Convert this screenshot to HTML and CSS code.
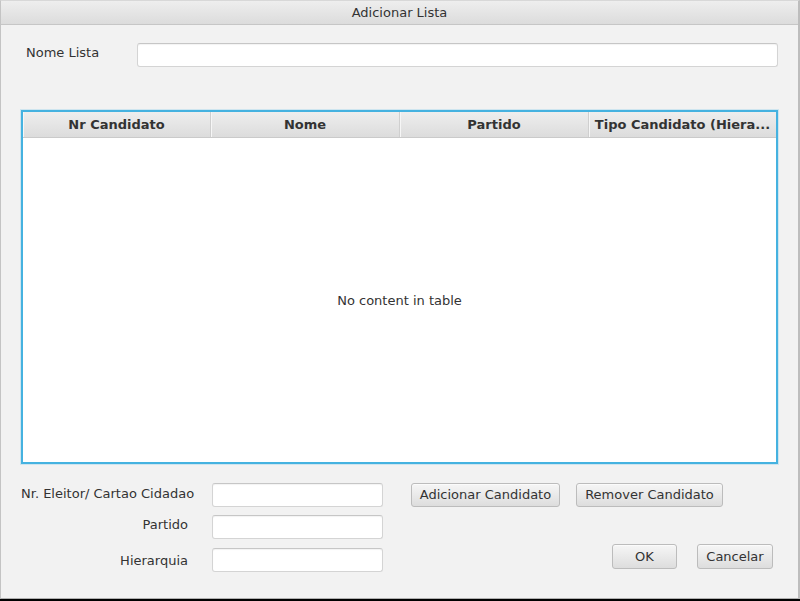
FILE: index.html
```html
<!DOCTYPE html>
<html lang="pt">
<head>
<meta charset="utf-8">
<title>Adicionar Lista</title>
<link rel="stylesheet" href="styles.css">
</head>
<body>
<div class="window">
  <div class="titlebar">Adicionar Lista</div>
  <div class="content">
    <div class="name-row">
      <span class="name-label">Nome Lista</span>
      <input class="field name-field" type="text">
    </div>
    <div class="table">
      <div class="thead">
        <div class="th">Nr Candidato</div>
        <div class="th">Nome</div>
        <div class="th">Partido</div>
        <div class="th">Tipo Candidato (Hiera...</div>
      </div>
      <div class="tbody">No content in table</div>
    </div>
    <div class="bottom">
      <div class="form">
        <span class="lbl lbl-left">Nr. Eleitor/ Cartao Cidadao</span>
        <input class="field small-field" type="text">
        <span class="lbl lbl-right lbl-mid">Partido</span>
        <input class="field small-field" type="text">
        <span class="lbl lbl-right lbl-last">Hierarquia</span>
        <input class="field small-field field-last" type="text">
      </div>
      <div class="actions">
        <div class="cand-buttons">
          <button class="btn btn-add">Adicionar Candidato</button>
          <button class="btn btn-rem">Remover Candidato</button>
        </div>
        <div class="dialog-buttons">
          <button class="btn btn-ok">OK</button>
          <button class="btn btn-cancel">Cancelar</button>
        </div>
      </div>
    </div>
  </div>
</div>
</body>
</html>
```
FILE: styles.css
```css
* { box-sizing: border-box; }
html, body { margin: 0; padding: 0; }
body {
  width: 800px;
  height: 601px;
  overflow: hidden;
  background: #000;
  font-family: "DejaVu Sans", sans-serif;
  font-size: 13px;
  color: #333;
}
.window {
  width: 800px;
  height: 599px;
  background: #f2f2f2;
  border-left: 1px solid #c4c4c4;
  border-right: 2px solid #bdbdbd;
  border-bottom: 1px solid #b0b0b0;
  border-top: 1px solid #d8d8d8;
  display: flex;
  flex-direction: column;
}
.titlebar {
  height: 24px;
  flex: none;
  background: linear-gradient(#eeeeee, #dcdcdc);
  border-bottom: 1px solid #c6c6c6;
  text-align: center;
  line-height: 23px;
  color: #333;
}
.content {
  padding: 18px 20px 0 20px;
  display: flex;
  flex-direction: column;
}
.name-row {
  display: flex;
  align-items: center;
  height: 24px;
}
.name-label {
  width: 116px;
  padding-left: 5px;
  padding-bottom: 5px;
}
.field {
  height: 24px;
  background: #fff;
  border: 1px solid #d4d4d4;
  border-top-color: #c6c6c6;
  border-radius: 3px;
  box-shadow: inset 0 1px 1px rgba(0,0,0,0.05);
  font: inherit;
  padding: 0 6px;
  outline: none;
}
.name-field { flex: 1; }
.table {
  margin-top: 43px;
  height: 354px;
  border: 2px solid #45b2e0;
  box-shadow: 0 0 0 1px rgba(140,205,235,0.35);
  background: #fff;
  display: flex;
  flex-direction: column;
}
.thead {
  display: grid;
  grid-template-columns: 188px 189px 189px 1fr;
  height: 26px;
  flex: none;
  background: linear-gradient(#eeeeee, #dcdcdc);
  border-bottom: 1px solid #cacaca;
}
.th {
  font-weight: bold;
  text-align: center;
  line-height: 25px;
  border-right: 1px solid #cfcfcf;
  box-shadow: inset 1px 0 0 #f6f6f6;
  white-space: nowrap;
  overflow: hidden;
  color: #333;
}
.th:last-child { border-right: none; }
.tbody {
  flex: 1;
  display: flex;
  align-items: center;
  justify-content: center;
}
.bottom {
  margin-top: 19px;
  display: flex;
}
.form {
  display: grid;
  grid-template-columns: 191px 170px;
  row-gap: 8px;
  align-items: center;
}
.lbl { padding-bottom: 3px; white-space: nowrap; }
.lbl-right { text-align: right; padding-right: 24px; }
.lbl-mid { padding-bottom: 5px; }
.lbl-last { padding-bottom: 0; }
.lbl-last, .field-last { margin-top: 1px; }
.small-field { width: 171px; }
.actions {
  margin-left: 29px;
  flex: 1;
  display: flex;
  flex-direction: column;
}
.cand-buttons {
  display: flex;
  gap: 16px;
}
.dialog-buttons {
  margin-top: 37px;
  display: flex;
  justify-content: flex-end;
  gap: 20px;
  padding-right: 5px;
}
.btn {
  height: 24px;
  font: inherit;
  color: #333;
  white-space: nowrap;
  background: linear-gradient(#f6f6f6, #dddddd);
  border: 1px solid #bcbcbc;
  border-radius: 3px;
  box-shadow: inset 0 1px 0 #fbfbfb;
  padding: 0;
  line-height: 20px;
}
.btn-add { width: 149px; }
.btn-rem { width: 147px; }
.btn-ok { width: 65px; height: 25px; }
.btn-cancel { width: 76px; height: 25px; }
```
